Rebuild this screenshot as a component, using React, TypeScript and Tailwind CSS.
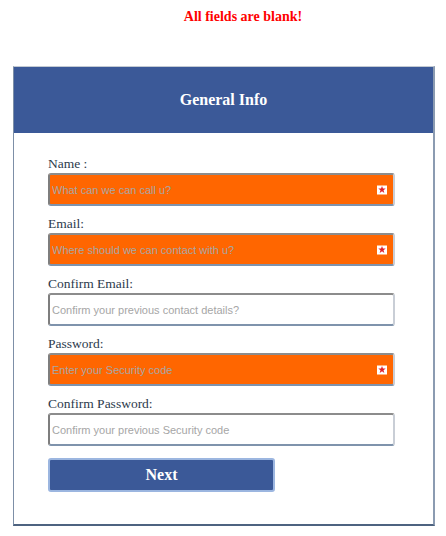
import React from 'react';

const Star = () => (
  <span className="absolute right-[8px] top-1/2 -translate-y-1/2 w-[10px] h-[9px] bg-white flex items-center justify-center">
    <svg viewBox="0 0 10 10" className="w-[8px] h-[8px]">
      <polygon points="5,0.5 6.2,3.8 9.6,3.8 6.9,5.9 7.9,9.3 5,7.2 2.1,9.3 3.1,5.9 0.4,3.8 3.8,3.8" fill="#e0202a" />
    </svg>
  </span>
);

const fields = [
  { label: 'Name :', placeholder: 'What can we can call u?', error: true, type: 'text' },
  { label: 'Email:', placeholder: 'Where should we can contact with u?', error: true, type: 'text' },
  { label: 'Confirm Email:', placeholder: 'Confirm your previous contact details?', error: false, type: 'text' },
  { label: 'Password:', placeholder: 'Enter your Security code', error: true, type: 'password' },
  { label: 'Confirm Password:', placeholder: 'Confirm your previous Security code', error: false, type: 'password' },
];

const App: React.FC = () => {
  return (
    <div className="w-[446px] h-[536px] bg-white" style={{ fontFamily: '"Liberation Serif", serif' }}>
      <div className="pt-[8px] pl-[40px] text-center text-[14px] leading-[18px] font-bold text-[#ff0000]">
        All fields are blank!
      </div>

      <div className="mt-[40px] ml-[13px] w-[422px] border-l border-r-2 border-t border-b-2 border-l-[#7d8fa7] border-r-[#8b9bb1] border-t-[#c3cad3] border-b-[#4e6380]">
        {/* Header */}
        <div className="h-[66px] bg-[#3b5998] flex items-center justify-center">
          <h2 className="text-[16px] font-bold text-white">General Info</h2>
        </div>

        {/* Form */}
        <div className="pt-[22px] pb-[32px] pl-[34px]">
          {fields.map((f) => (
            <div key={f.label} className="mb-[9px]">
              <label className="block text-[13.5px] leading-[18px] text-[#2c3a4c]">{f.label}</label>
              <div className="relative w-[347px]">
                <input
                  type={f.type}
                  placeholder={f.placeholder}
                  className={`w-full h-[33px] pl-[2px] rounded-[3px] border-2 border-t-[#8c8c8c] border-l-[#7e7e7e] border-r-[#c9ced6] border-b-[#7f93ac] text-[11px] outline-none placeholder:text-[#a6a6a6] ${f.error ? 'bg-[#ff6600]' : 'bg-white'}`}
                  style={{ fontFamily: '"Liberation Sans", Arial, sans-serif' }}
                />
                {f.error && <Star />}
              </div>
            </div>
          ))}

          <button className="mt-[3px] w-[227px] h-[34px] rounded-[3px] border-2 border-[#9cb6e0] bg-[#3b5998] text-white text-[16px] font-bold">
            Next
          </button>
        </div>
      </div>
    </div>
  );
};

export default App;
